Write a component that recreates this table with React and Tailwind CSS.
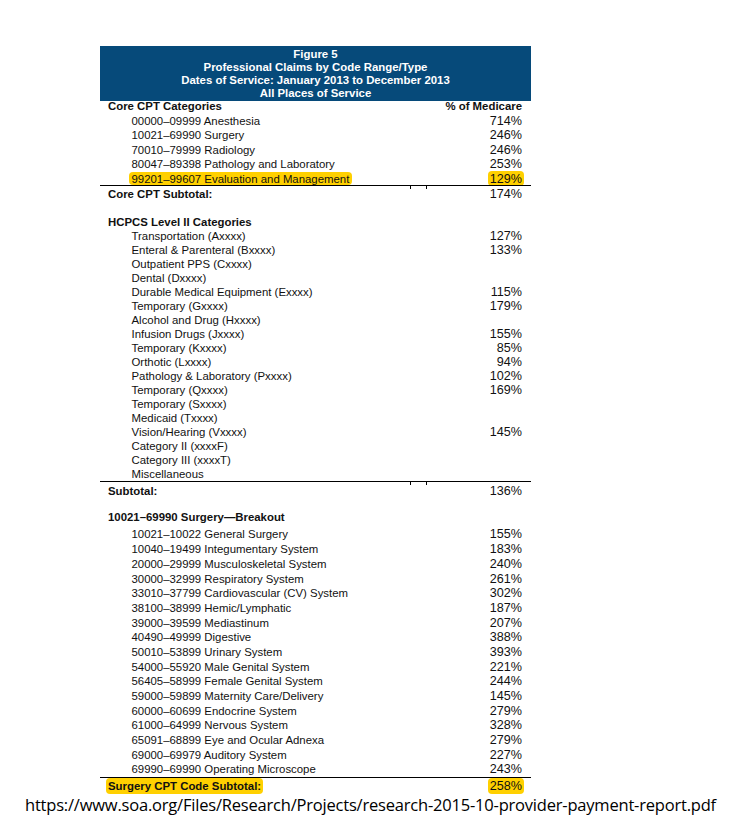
import React from "react";

const core = [
  ["00000–09999 Anesthesia", "714%"],
  ["10021–69990 Surgery", "246%"],
  ["70010–79999 Radiology", "246%"],
  ["80047–89398 Pathology and Laboratory", "253%"],
  ["99201–99607 Evaluation and Management", "129%", true],
];

const hcpcs = [
  ["Transportation (Axxxx)", "127%"],
  ["Enteral & Parenteral (Bxxxx)", "133%"],
  ["Outpatient PPS (Cxxxx)", ""],
  ["Dental (Dxxxx)", ""],
  ["Durable Medical Equipment (Exxxx)", "115%"],
  ["Temporary (Gxxxx)", "179%"],
  ["Alcohol and Drug (Hxxxx)", ""],
  ["Infusion Drugs (Jxxxx)", "155%"],
  ["Temporary (Kxxxx)", "85%"],
  ["Orthotic (Lxxxx)", "94%"],
  ["Pathology & Laboratory (Pxxxx)", "102%"],
  ["Temporary (Qxxxx)", "169%"],
  ["Temporary (Sxxxx)", ""],
  ["Medicaid (Txxxx)", ""],
  ["Vision/Hearing (Vxxxx)", "145%"],
  ["Category II (xxxxF)", ""],
  ["Category III (xxxxT)", ""],
  ["Miscellaneous", ""],
];

const surgery = [
  ["10021–10022 General Surgery", "155%"],
  ["10040–19499 Integumentary System", "183%"],
  ["20000–29999 Musculoskeletal System", "240%"],
  ["30000–32999 Respiratory System", "261%"],
  ["33010–37799 Cardiovascular (CV) System", "302%"],
  ["38100–38999 Hemic/Lymphatic", "187%"],
  ["39000–39599 Mediastinum", "207%"],
  ["40490–49999 Digestive", "388%"],
  ["50010–53899 Urinary System", "393%"],
  ["54000–55920 Male Genital System", "221%"],
  ["56405–58999 Female Genital System", "244%"],
  ["59000–59899 Maternity Care/Delivery", "145%"],
  ["60000–60699 Endocrine System", "279%"],
  ["61000–64999 Nervous System", "328%"],
  ["65091–68899 Eye and Ocular Adnexa", "279%"],
  ["69000–69979 Auditory System", "227%"],
  ["69990–69990 Operating Microscope", "243%"],
];

function Row({ label, value, hl, h }) {
  return (
    <div className={`flex items-baseline justify-between pl-[31.5px] pr-[9px] ${h}`}>
      <span className="text-[11.4px]">
        {hl ? (
          <span className="bg-[#ffd000] rounded-[4px] px-[2.5px] -mx-[2.5px] py-[0.5px]">{label}</span>
        ) : (
          label
        )}
      </span>
      <span className="text-[12.6px]">
        {hl ? (
          <span className="bg-[#ffd000] rounded-[4px] px-[2px] -mx-[2px] py-[0.5px]">{value}</span>
        ) : (
          value
        )}
      </span>
    </div>
  );
}

function Rule({ ticks }) {
  return (
    <div className="relative h-[1px] bg-black">
      {ticks && (
        <>
          <div className="absolute left-[310px] top-[1px] w-[1px] h-[3px] bg-black" />
          <div className="absolute left-[326px] top-[1px] w-[1px] h-[3px] bg-black" />
        </>
      )}
    </div>
  );
}

export default function App() {
  return (
    <div
      className="w-[733px] h-[815px] bg-white text-[#111] overflow-hidden"
      style={{ fontFamily: '"Liberation Sans", Arial, sans-serif' }}
    >
      <div className="pt-[46px] pl-[100px]">
        <div className="w-[431px]">
          <div className="h-[55px] bg-[#064a7a] text-white font-bold text-[11.4px] leading-[13px] flex flex-col items-center justify-center pt-[1px]">
            <div>Figure 5</div>
            <div>Professional Claims by Code Range/Type</div>
            <div>Dates of Service: January 2013 to December 2013</div>
            <div>All Places of Service</div>
          </div>

          <div className="flex items-end justify-between pl-[8px] pr-[9px] h-[11px] font-bold text-[11.4px] leading-[11px]">
            <span>Core CPT Categories</span>
            <span>% of Medicare</span>
          </div>
          <div className="h-[2px]" />
          {core.map(([l, v, hl]) => (
            <Row key={l} label={l} value={v} hl={hl} h="h-[14.3px] leading-[14.3px]" />
          ))}
          <Rule ticks />
          <div className="flex items-baseline justify-between pl-[8px] pr-[9px] h-[17px] leading-[17px]">
            <span className="font-bold text-[11.4px]">Core CPT Subtotal:</span>
            <span className="text-[12.6px]">174%</span>
          </div>

          <div className="h-[12px]" />
          <div className="pl-[8px] h-[14px] leading-[14px] font-bold text-[11.4px]">HCPCS Level II Categories</div>
          {hcpcs.map(([l, v], i) => (
            <Row key={l + i} label={l} value={v} h="h-[14px] leading-[14px]" />
          ))}
          <Rule ticks />
          <div className="flex items-baseline justify-between pl-[8px] pr-[9px] h-[18px] leading-[18px]">
            <span className="font-bold text-[11.4px]">Subtotal:</span>
            <span className="text-[12.6px]">136%</span>
          </div>

          <div className="h-[10px]" />
          <div className="pl-[8px] h-[14px] leading-[14px] font-bold text-[11.4px]">10021–69990 Surgery—Breakout</div>
          <div className="h-[3px]" />
          {surgery.map(([l, v]) => (
            <Row key={l} label={l} value={v} h="h-[14.7px] leading-[14.7px]" />
          ))}
          <Rule />
          <div className="flex items-baseline justify-between pl-[6px] pr-[7px] h-[16px] leading-[16px]">
            <span className="font-bold text-[11.4px] bg-[#ffd000] rounded-[4px] px-[2px]">Surgery CPT Code Subtotal:</span>
            <span className="text-[12.6px] bg-[#ffd000] rounded-[4px] px-[2px]">258%</span>
          </div>
        </div>
      </div>
      <div
        className="pl-[25px] pt-[1px] text-[16.5px] leading-[20px] text-black whitespace-nowrap tracking-[-0.2px]"
        style={{ fontFamily: '"Open Sans", "Noto Sans", sans-serif' }}
      >
        https://www.soa.org/Files/Research/Projects/research-2015-10-provider-payment-report.pdf
      </div>
    </div>
  );
}
